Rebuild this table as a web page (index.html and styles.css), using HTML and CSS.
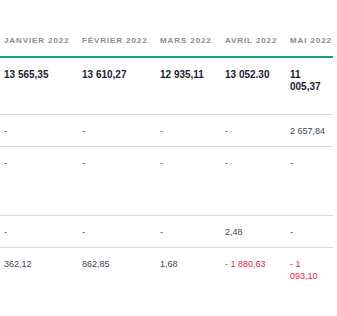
FILE: index.html
```html
<!DOCTYPE html>
<html lang="fr">
<head>
<meta charset="utf-8">
<link rel="stylesheet" href="styles.css">
</head>
<body>
<table class="grid">
  <colgroup>
    <col class="c-wide"><col class="c-wide"><col class="c-mid"><col class="c-mid"><col class="c-last">
  </colgroup>
  <thead>
    <tr>
      <th>Janvier 2022</th>
      <th>Février 2022</th>
      <th>Mars 2022</th>
      <th>Avril 2022</th>
      <th>Mai 2022</th>
    </tr>
  </thead>
  <tbody>
    <tr class="r-total">
      <td>13 565,35</td>
      <td>13 610,27</td>
      <td>12 935,11</td>
      <td>13 052.30</td>
      <td>11 005,37</td>
    </tr>
    <tr class="r-short">
      <td>-</td>
      <td>-</td>
      <td>-</td>
      <td>-</td>
      <td>2 657,84</td>
    </tr>
    <tr class="r-tall">
      <td>-</td>
      <td>-</td>
      <td>-</td>
      <td>-</td>
      <td>-</td>
    </tr>
    <tr class="r-short">
      <td>-</td>
      <td>-</td>
      <td>-</td>
      <td>2,48</td>
      <td>-</td>
    </tr>
    <tr class="r-last">
      <td>362,12</td>
      <td>862,85</td>
      <td>1,68</td>
      <td class="neg">- 1 880,63</td>
      <td class="neg">- 1 093,10</td>
    </tr>
  </tbody>
</table>
</body>
</html>
```

FILE: styles.css
```css
html, body {
  margin: 0;
  padding: 0;
  background: #ffffff;
}

.grid {
  margin-top: 26px;
  width: 333px;
  table-layout: fixed;
  border-collapse: collapse;
  font-family: "Liberation Sans", Arial, sans-serif;
}

.c-wide { width: 78px; }
.c-mid { width: 65px; }
.c-last { width: 47px; }

.grid th {
  text-align: left;
  font-size: 8px;
  line-height: 12px;
  font-weight: 600;
  letter-spacing: 0.9px;
  text-transform: uppercase;
  color: #8d8990;
  white-space: nowrap;
  padding: 9px 4px 9px;
  border-bottom: 2px solid #12a57c;
}

.grid td {
  vertical-align: top;
  text-align: left;
  font-size: 9px;
  line-height: 12px;
  color: #3a4656;
  padding: 10px 4px 0;
  border-bottom: 1px solid #dadada;
}

.r-total td {
  font-size: 10px;
  font-weight: 700;
  color: #1d2133;
  padding-top: 11px;
}

.r-total { height: 57px; }
.r-short { height: 32px; }
.r-tall { height: 69px; }
.r-last { height: 60px; }

.r-last td { border-bottom: none; }

.grid td.neg { color: #f0193f; }
```
